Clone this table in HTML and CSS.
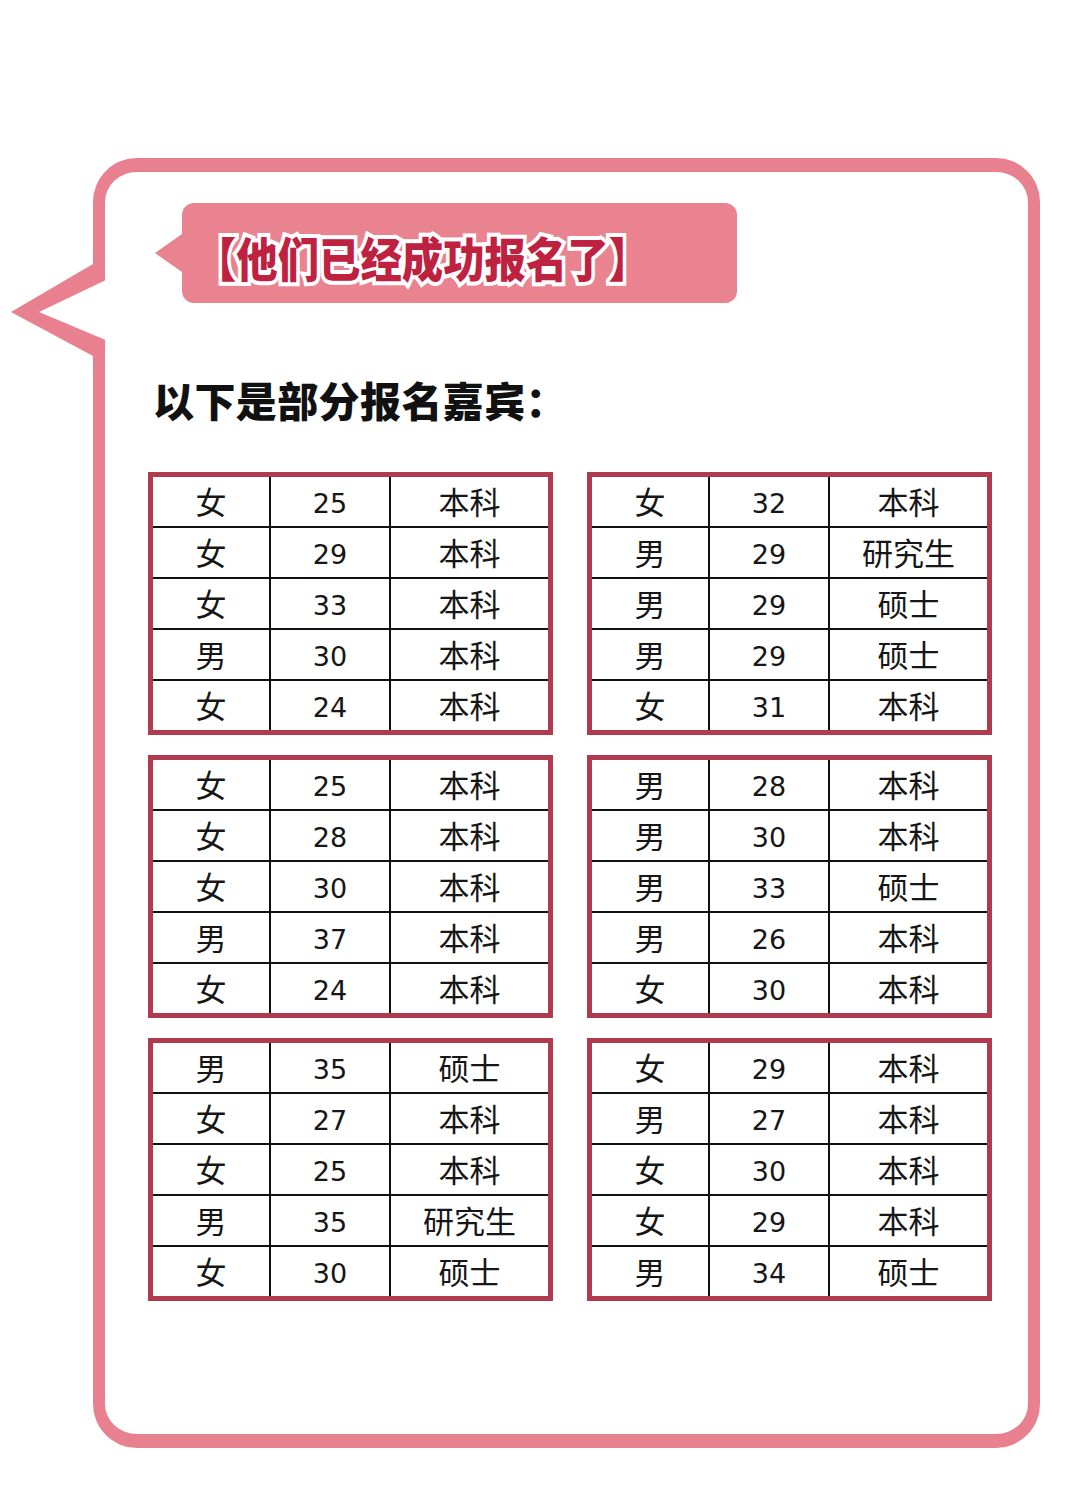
FILE: index.html
```html
<!DOCTYPE html>
<html lang="zh-CN">
<head>
<meta charset="utf-8">
<title>他们已经成功报名了</title>
<link rel="stylesheet" href="styles.css">
</head>
<body>
<div class="bubble">
  <svg class="tail" width="120" height="110" viewBox="0 250 120 110" aria-hidden="true">
    <polygon points="93,264 11,312 93,356" fill="#e8808f"/>
    <polygon points="108,279 39,312 108,341" fill="#ffffff"/>
  </svg>
  <div class="banner">
    <span class="banner-text">【他们已经成功报名了】</span>
  </div>
  <h2 class="subhead">以下是部分报名嘉宾：</h2>
  <div class="tables">
    <div class="tbl">
      <div class="c">女</div><div class="c n">25</div><div class="c">本科</div>
      <div class="c">女</div><div class="c n">29</div><div class="c">本科</div>
      <div class="c">女</div><div class="c n">33</div><div class="c">本科</div>
      <div class="c">男</div><div class="c n">30</div><div class="c">本科</div>
      <div class="c">女</div><div class="c n">24</div><div class="c">本科</div>
    </div>
    <div class="tbl">
      <div class="c">女</div><div class="c n">32</div><div class="c">本科</div>
      <div class="c">男</div><div class="c n">29</div><div class="c">研究生</div>
      <div class="c">男</div><div class="c n">29</div><div class="c">硕士</div>
      <div class="c">男</div><div class="c n">29</div><div class="c">硕士</div>
      <div class="c">女</div><div class="c n">31</div><div class="c">本科</div>
    </div>
    <div class="tbl">
      <div class="c">女</div><div class="c n">25</div><div class="c">本科</div>
      <div class="c">女</div><div class="c n">28</div><div class="c">本科</div>
      <div class="c">女</div><div class="c n">30</div><div class="c">本科</div>
      <div class="c">男</div><div class="c n">37</div><div class="c">本科</div>
      <div class="c">女</div><div class="c n">24</div><div class="c">本科</div>
    </div>
    <div class="tbl">
      <div class="c">男</div><div class="c n">28</div><div class="c">本科</div>
      <div class="c">男</div><div class="c n">30</div><div class="c">本科</div>
      <div class="c">男</div><div class="c n">33</div><div class="c">硕士</div>
      <div class="c">男</div><div class="c n">26</div><div class="c">本科</div>
      <div class="c">女</div><div class="c n">30</div><div class="c">本科</div>
    </div>
    <div class="tbl">
      <div class="c">男</div><div class="c n">35</div><div class="c">硕士</div>
      <div class="c">女</div><div class="c n">27</div><div class="c">本科</div>
      <div class="c">女</div><div class="c n">25</div><div class="c">本科</div>
      <div class="c">男</div><div class="c n">35</div><div class="c">研究生</div>
      <div class="c">女</div><div class="c n">30</div><div class="c">硕士</div>
    </div>
    <div class="tbl">
      <div class="c">女</div><div class="c n">29</div><div class="c">本科</div>
      <div class="c">男</div><div class="c n">27</div><div class="c">本科</div>
      <div class="c">女</div><div class="c n">30</div><div class="c">本科</div>
      <div class="c">女</div><div class="c n">29</div><div class="c">本科</div>
      <div class="c">男</div><div class="c n">34</div><div class="c">硕士</div>
    </div>
  </div>
</div>
</body>
</html>
```

FILE: styles.css
```css
html, body {
  margin: 0;
  padding: 0;
  background: #ffffff;
}

body {
  width: 1080px;
  height: 1486px;
  overflow: hidden;
  padding-top: 158px;
  box-sizing: border-box;
  font-family: "Noto Sans CJK SC", "Noto Sans", sans-serif;
}

.bubble {
  margin-left: 93px;
  width: 947px;
  height: 1290px;
  box-sizing: border-box;
  border: 12px solid #e8808f;
  border-top-width: 14px;
  border-bottom-width: 14px;
  border-radius: 44px;
  padding: 31px 0 0 77px;
}

.tail {
  position: absolute;
  left: 0;
  top: 250px;
  display: block;
}

.banner {
  position: relative;
  width: 555px;
  height: 100px;
  background: #e9838f;
  border-radius: 12px;
  display: flex;
  align-items: center;
  padding-left: 13px;
  padding-top: 6px;
  box-sizing: border-box;
}

.banner::before {
  content: "";
  position: absolute;
  left: -27px;
  top: 31px;
  width: 0;
  height: 0;
  border-top: 19px solid transparent;
  border-bottom: 19px solid transparent;
  border-right: 27px solid #e9838f;
}

.banner-text {
  display: inline-block;
  font-family: "Noto Sans CJK SC", sans-serif;
  font-weight: 900;
  font-size: 47px;
  line-height: 47px;
  color: #bf2140;
  -webkit-text-stroke: 8px #ffffff;
  paint-order: stroke fill;
  transform: scaleX(0.88);
  transform-origin: left center;
  white-space: nowrap;
}

.subhead {
  margin: 76px 0 0 -29px;
  font-family: "Noto Sans CJK SC", sans-serif;
  font-weight: 900;
  font-size: 41px;
  line-height: 41px;
  color: #111111;
  letter-spacing: 0.4px;
}

.tables {
  margin: 52px 0 0 -34px;
  display: grid;
  grid-template-columns: 405px 405px;
  column-gap: 34px;
  row-gap: 20px;
}

.tbl {
  width: 405px;
  height: 263px;
  box-sizing: border-box;
  border: 5px solid #b23a4f;
  background: #111111;
  display: grid;
  grid-template-columns: 116px 118px 157px;
  grid-template-rows: repeat(5, 49px);
  gap: 2px;
}

.c {
  background: #ffffff;
  display: flex;
  align-items: center;
  justify-content: center;
  font-family: "Noto Sans CJK SC", sans-serif;
  font-weight: 400;
  font-size: 31px;
  line-height: 31px;
  padding-bottom: 3px;
  box-sizing: border-box;
  color: #161616;
}

.c.n {
  font-family: "DejaVu Sans", "Liberation Sans", sans-serif;
  font-size: 27px;
  line-height: 27px;
  padding-bottom: 0;
  padding-top: 3px;
}
```
